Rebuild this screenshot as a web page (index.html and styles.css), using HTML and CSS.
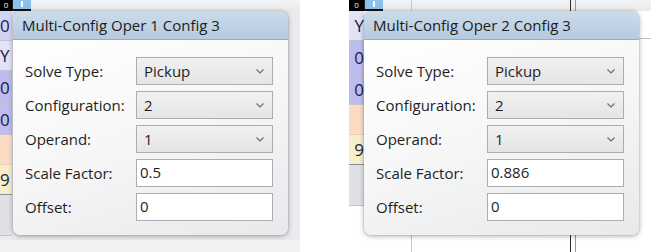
FILE: index.html
```html
<!DOCTYPE html>
<html lang="en">
<head>
  <meta charset="UTF-8">
  <meta name="viewport" content="width=device-width, initial-scale=1.0">
  <link rel="stylesheet" href="styles.css">
</head>
<body>
  <div class="shots">

    <!-- first capture: operand 1 -->
    <div class="shot shot-grey">
      <div class="topbar">
        <div class="top-cell">0</div>
        <div class="top-btn"><span></span></div>
      </div>
      <div class="column col-left">
        <div class="cell c-lav">0</div>
        <div class="cell c-lav2">Y</div>
        <div class="cell c-blue tall">0</div>
        <div class="cell c-blue">0</div>
        <div class="cell c-peach"></div>
        <div class="cell c-yellow">9</div>
        <div class="cell c-grey"></div>
      </div>

      <div class="dialog dlg-left">
        <div class="dialog-title">Multi-Config Oper 1 Config 3</div>
        <div class="dialog-body">
          <label>Solve Type:</label>
          <div class="combo">Pickup<svg width="8" height="5" viewBox="0 0 8 5"><polyline points="0.5,0.5 4,4 7.5,0.5" fill="none" stroke="#6a6a6a" stroke-width="1.1"/></svg></div>
          <label>Configuration:</label>
          <div class="combo">2<svg width="8" height="5" viewBox="0 0 8 5"><polyline points="0.5,0.5 4,4 7.5,0.5" fill="none" stroke="#6a6a6a" stroke-width="1.1"/></svg></div>
          <label>Operand:</label>
          <div class="combo">1<svg width="8" height="5" viewBox="0 0 8 5"><polyline points="0.5,0.5 4,4 7.5,0.5" fill="none" stroke="#6a6a6a" stroke-width="1.1"/></svg></div>
          <label>Scale Factor:</label>
          <div class="textbox">0.5</div>
          <label>Offset:</label>
          <div class="textbox">0</div>
        </div>
      </div>
    </div>

    <div class="spacer"></div>

    <!-- second capture: operand 2 -->
    <div class="shot shot-white">
      <div class="topbar">
        <div class="top-cell wide">0</div>
        <div class="top-btn"><span></span></div>
      </div>
      <div class="column col-right">
        <div class="cell c-lav2">Y</div>
        <div class="cell c-blue tall">0</div>
        <div class="cell c-blue">0</div>
        <div class="cell c-peach"></div>
        <div class="cell c-yellow">9</div>
        <div class="cell c-grey"></div>
      </div>
      <div class="vline v1"></div>
      <div class="vline v2"></div>
      <div class="vline v3"></div>
      <div class="hline"></div>

      <div class="dialog dlg-right">
        <div class="dialog-title">Multi-Config Oper 2 Config 3</div>
        <div class="dialog-body">
          <label>Solve Type:</label>
          <div class="combo">Pickup<svg width="8" height="5" viewBox="0 0 8 5"><polyline points="0.5,0.5 4,4 7.5,0.5" fill="none" stroke="#6a6a6a" stroke-width="1.1"/></svg></div>
          <label>Configuration:</label>
          <div class="combo">2<svg width="8" height="5" viewBox="0 0 8 5"><polyline points="0.5,0.5 4,4 7.5,0.5" fill="none" stroke="#6a6a6a" stroke-width="1.1"/></svg></div>
          <label>Operand:</label>
          <div class="combo">1<svg width="8" height="5" viewBox="0 0 8 5"><polyline points="0.5,0.5 4,4 7.5,0.5" fill="none" stroke="#6a6a6a" stroke-width="1.1"/></svg></div>
          <label>Scale Factor:</label>
          <div class="textbox">0.886</div>
          <label>Offset:</label>
          <div class="textbox">0</div>
        </div>
      </div>
    </div>

  </div>
</body>
</html>
```

FILE: styles.css
```css
html, body {
  margin: 0;
  padding: 0;
  background: #ffffff;
}
body {
  font-family: "Open Sans", "Noto Sans", sans-serif;
  width: 651px;
  height: 252px;
  overflow: hidden;
}
.shots {
  display: flex;
  height: 252px;
}
.shot {
  position: relative;
  height: 252px;
  overflow: hidden;
}
.shot-grey {
  width: 300px;
  background: linear-gradient(#eaebee 0, #eaebee 240px, #f2f2f2 240px);
}
.shot-white {
  width: 302px;
  background: #ffffff;
}
.spacer {
  width: 49px;
}

/* strip of the grid behind the dialog */
.topbar {
  display: flex;
  height: 11px;
  background: linear-gradient(#f2f3f4, #e9eaec);
}
.top-cell {
  width: 12px;
  background: #000;
  color: #f4f4f4;
  font-size: 8px;
  line-height: 10px;
  text-align: center;
}
.top-cell.wide {
  width: 15px;
}
.top-btn {
  width: 18px;
  background: #8dc1ec;
  border-left: 1px solid #222;
  border-bottom: 2px solid #111;
  display: flex;
  justify-content: center;
}
.top-btn span {
  width: 2px;
  height: 6px;
  background: #fff;
  margin-top: 1px;
}
.column {
  display: flex;
  flex-direction: column;
  width: 12px;
  font-size: 17px;
  color: #1c1c40;
}
.col-right {
  width: 15px;
  text-align: right;
}
.cell {
  height: 29px;
  line-height: 29px;
  border-bottom: 1px solid #c4c4d4;
  overflow: hidden;
}
.cell.tall {
  height: 33px;
  line-height: 33px;
}
.c-lav {
  background: #d3d3f7;
}
.c-lav2 {
  background: #e2e2f8;
}
.c-blue {
  background: #bdbdf1;
}
.c-peach {
  background: #fcdcc2;
  border-bottom-color: #e8d0b8;
}
.c-yellow {
  background: #f6efca;
  border-bottom: 1px solid #8a9099;
}
.c-grey {
  height: 40px;
  background: #dfe1e5;
}
.vline {
  position: absolute;
  top: 0;
  bottom: 0;
  width: 1px;
  background: #2e2e2e;
}
.v1 {
  left: 62px;
  background: #c8c8c8;
}
.v2 {
  left: 221px;
}
.v3 {
  left: 226px;
  background: #9a9a9a;
}
.hline {
  position: absolute;
  left: 289px;
  right: 0;
  top: 38px;
  height: 1px;
  background: #c0c0c0;
}

/* the popup dialog */
.dialog {
  position: absolute;
  top: 11px;
  width: 275px;
  height: 224px;
  border-radius: 7px;
  box-shadow: 0 1px 5px rgba(0, 0, 0, 0.35), 0 0 1px rgba(0, 0, 0, 0.4);
  overflow: hidden;
  display: flex;
  flex-direction: column;
}
.dlg-left {
  left: 13px;
}
.dlg-right {
  left: 15px;
}
.dialog-title {
  height: 28px;
  line-height: 29px;
  padding-left: 9px;
  font-size: 15px;
  color: #1b1b1b;
  background: linear-gradient(#cbdbea, #b6cbe0);
  border-bottom: 1px solid #94acc4;
}
.dialog-body {
  flex: 1;
  display: grid;
  grid-template-columns: 111px 137px;
  grid-auto-rows: 28px;
  row-gap: 6px;
  padding: 17px 14px 14px 12px;
  background: linear-gradient(160deg, #ffffff 0%, #f6f6f7 50%, #e8e9eb 100%);
}
.dialog-body label {
  font-size: 15px;
  color: #1e1e1e;
  line-height: 29px;
}
.combo, .textbox {
  box-sizing: border-box;
  border: 1px solid #adadad;
  font-size: 15px;
  color: #1e1e1e;
  line-height: 26px;
  padding-left: 7px;
}
.combo {
  display: flex;
  justify-content: space-between;
  align-items: center;
  padding-right: 8px;
  background: linear-gradient(#f1f1f1, #e5e5e5);
}
.textbox {
  background: #ffffff;
  border-color: #abadb3;
  padding-left: 3px;
  line-height: 24px;
}
```
